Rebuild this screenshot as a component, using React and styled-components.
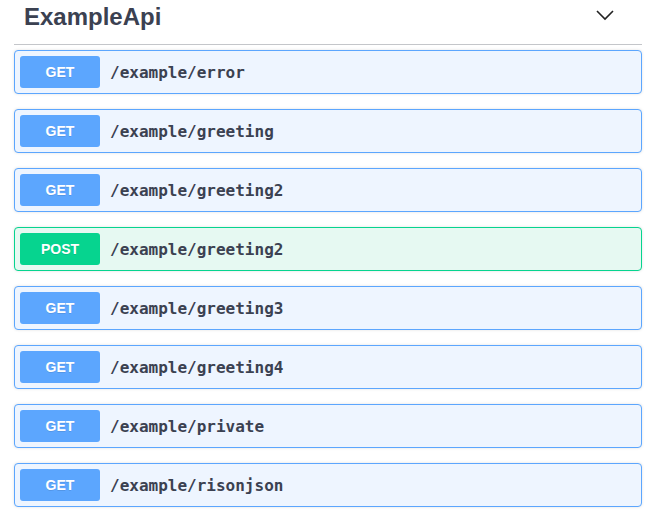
import React from 'react';
import styled, { createGlobalStyle } from 'styled-components';

const GlobalStyle = createGlobalStyle`
  body {
    margin: 0;
    background: #ffffff;
    font-family: 'Liberation Sans', Arial, sans-serif;
    color: #3b4151;
  }
`;

// method colours, swagger style
const METHODS = {
  GET: { main: '#5ca6fe', soft: '#eef5ff' },
  POST: { main: '#06d48f', soft: '#e6f9f2' },
};

const Page = styled.div`
  padding: 0 12px 0 14px;
  width: 654px;
  box-sizing: border-box;
`;

const TagHeader = styled.div`
  display: flex;
  align-items: center;
  justify-content: space-between;
  height: 45px;
  box-sizing: border-box;
  padding: 0 27px 0 10px;
  border-bottom: 1px solid rgba(59, 65, 81, 0.3);
  margin-bottom: 5px;
`;

const TagTitle = styled.h3`
  margin: 0;
  font-family: 'Liberation Sans', Arial, sans-serif;
  font-size: 24px;
  font-weight: 700;
  color: #3b4151;
  position: relative;
  top: -5px;
`;

const Chevron = styled.svg`
  width: 20px;
  height: 20px;
  position: relative;
  top: -7px;
`;

const Block = styled.div`
  display: flex;
  align-items: center;
  height: 44px;
  box-sizing: border-box;
  padding: 0 5px;
  margin-bottom: 15px;
  border: 1px solid ${(p) => p.$c.main};
  border-radius: 4px;
  background: ${(p) => p.$c.soft};
  box-shadow: 0 0 3px rgba(0, 0, 0, 0.12);
`;

const Badge = styled.span`
  display: inline-flex;
  align-items: center;
  justify-content: center;
  width: 80px;
  height: 32px;
  border-radius: 3px;
  background: ${(p) => p.$c.main};
  color: #ffffff;
  font-family: 'Liberation Sans', Arial, sans-serif;
  font-size: 14px;
  font-weight: 700;
  text-shadow: 0 1px 0 rgba(0, 0, 0, 0.1);
`;

const Path = styled.span`
  padding: 0 10px;
  font-family: 'DejaVu Sans Mono', monospace;
  font-size: 16px;
  font-weight: 700;
  color: #3b4151;
`;

const endpoints = [
  ['GET', '/example/error'],
  ['GET', '/example/greeting'],
  ['GET', '/example/greeting2'],
  ['POST', '/example/greeting2'],
  ['GET', '/example/greeting3'],
  ['GET', '/example/greeting4'],
  ['GET', '/example/private'],
  ['GET', '/example/risonjson'],
];

export default function App() {
  return (
    <>
      <GlobalStyle />
      <Page>
        <TagHeader>
          <TagTitle>ExampleApi</TagTitle>
          <Chevron viewBox="0 0 20 20">
            <polyline points="2,6 10,14 18,6" fill="none" stroke="#222" strokeWidth="1.6" />
          </Chevron>
        </TagHeader>
        {endpoints.map(([method, path], i) => (
          <Block key={i} $c={METHODS[method]}>
            <Badge $c={METHODS[method]}>{method}</Badge>
            <Path>{path}</Path>
          </Block>
        ))}
      </Page>
    </>
  );
}
